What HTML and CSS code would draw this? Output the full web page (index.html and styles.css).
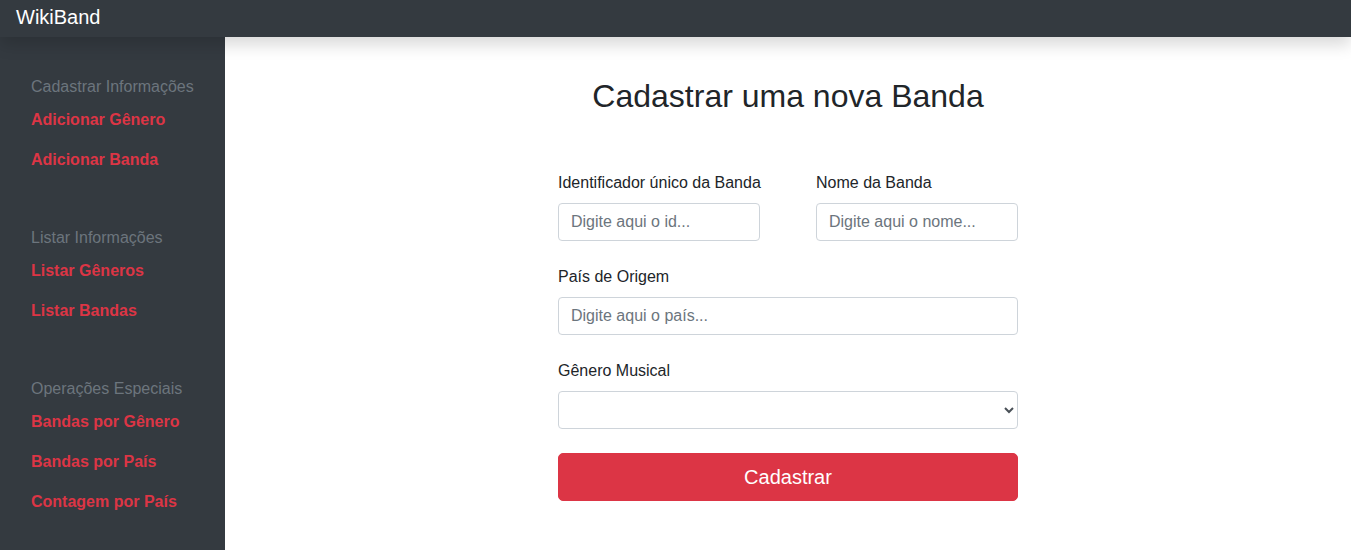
FILE: index.html
```html
<!DOCTYPE html>
<html lang="pt-BR">
<head>
<meta charset="utf-8">
<title>WikiBand</title>
<link rel="stylesheet" href="styles.css">
</head>
<body>
<header class="navbar">
  <span class="brand">WikiBand</span>
</header>
<div class="layout">
  <nav class="sidebar">
    <div class="group">
      <div class="group-title">Cadastrar Informações</div>
      <a class="side-link" href="#">Adicionar Gênero</a>
      <a class="side-link" href="#">Adicionar Banda</a>
    </div>
    <div class="group">
      <div class="group-title">Listar Informações</div>
      <a class="side-link" href="#">Listar Gêneros</a>
      <a class="side-link" href="#">Listar Bandas</a>
    </div>
    <div class="group">
      <div class="group-title">Operações Especiais</div>
      <a class="side-link" href="#">Bandas por Gênero</a>
      <a class="side-link" href="#">Bandas por País</a>
      <a class="side-link" href="#">Contagem por País</a>
    </div>
  </nav>
  <main class="main">
    <h2 class="title">Cadastrar uma nova Banda</h2>
    <form class="form">
      <div class="row">
        <div class="field">
          <label class="label" for="id">Identificador único da Banda</label>
          <input class="control" id="id" type="text" placeholder="Digite aqui o id...">
        </div>
        <div class="field">
          <label class="label" for="nome">Nome da Banda</label>
          <input class="control" id="nome" type="text" placeholder="Digite aqui o nome...">
        </div>
      </div>
      <div class="field">
        <label class="label" for="pais">País de Origem</label>
        <input class="control" id="pais" type="text" placeholder="Digite aqui o país...">
      </div>
      <div class="field">
        <label class="label" for="genero">Gênero Musical</label>
        <select class="control select" id="genero"><option></option></select>
      </div>
      <button class="btn" type="button">Cadastrar</button>
    </form>
  </main>
</div>
</body>
</html>
```
FILE: styles.css
```css
* { box-sizing: border-box; }
html, body { margin: 0; padding: 0; }
body {
  font-family: "Liberation Sans", Arial, sans-serif;
  font-size: 16px;
  line-height: 1.5;
  color: #212529;
  background: #fff;
}
.navbar {
  position: relative;
  z-index: 2;
  height: 37px;
  background: #343a40;
  padding: 2px 16px 0;
  box-shadow: 0 8px 16px rgba(0,0,0,0.15);
}
.brand {
  display: block;
  color: #fff;
  font-size: 20px;
  line-height: 30px;
}
.layout {
  display: flex;
  min-height: calc(100vh - 37px);
}
.sidebar {
  width: 225px;
  flex: none;
  background: #343a40;
  padding: 38px 0 0 31px;
}
.group { display: flex; flex-direction: column; margin-bottom: 46px; }
.group-title {
  color: #6c757d;
  line-height: 24px;
  margin-bottom: 1px;
}
.side-link {
  color: #dc3545;
  font-weight: bold;
  text-decoration: none;
  padding: 8px 0;
  line-height: 24px;
}
.main {
  flex: 1;
  padding-top: 40px;
  display: flex;
  flex-direction: column;
  align-items: center;
}
.title {
  margin: 0 0 56px;
  font-size: 32px;
  font-weight: 500;
  line-height: 1.2;
  text-align: center;
}
.form {
  width: 460px;
  display: flex;
  flex-direction: column;
}
.row {
  display: grid;
  grid-template-columns: 202px 202px;
  column-gap: 56px;
}
.field { display: flex; flex-direction: column; margin-bottom: 24px; }
.label { display: block; margin-bottom: 8px; line-height: 24px; white-space: nowrap; }
.control {
  height: 38px;
  padding: 6px 12px;
  font-family: inherit;
  font-size: 16px;
  line-height: 24px;
  color: #495057;
  background: #fff;
  border: 1px solid #ced4da;
  border-radius: 4px;
  width: 100%;
}
.control::placeholder { color: #6c757d; opacity: 1; }
.select { padding: 6px 8px; }
.btn {
  height: 48px;
  width: 100%;
  border: 1px solid #dc3545;
  background: #dc3545;
  color: #fff;
  font-family: inherit;
  font-size: 20px;
  line-height: 30px;
  padding: 8px 16px;
  border-radius: 5px;
}
```
